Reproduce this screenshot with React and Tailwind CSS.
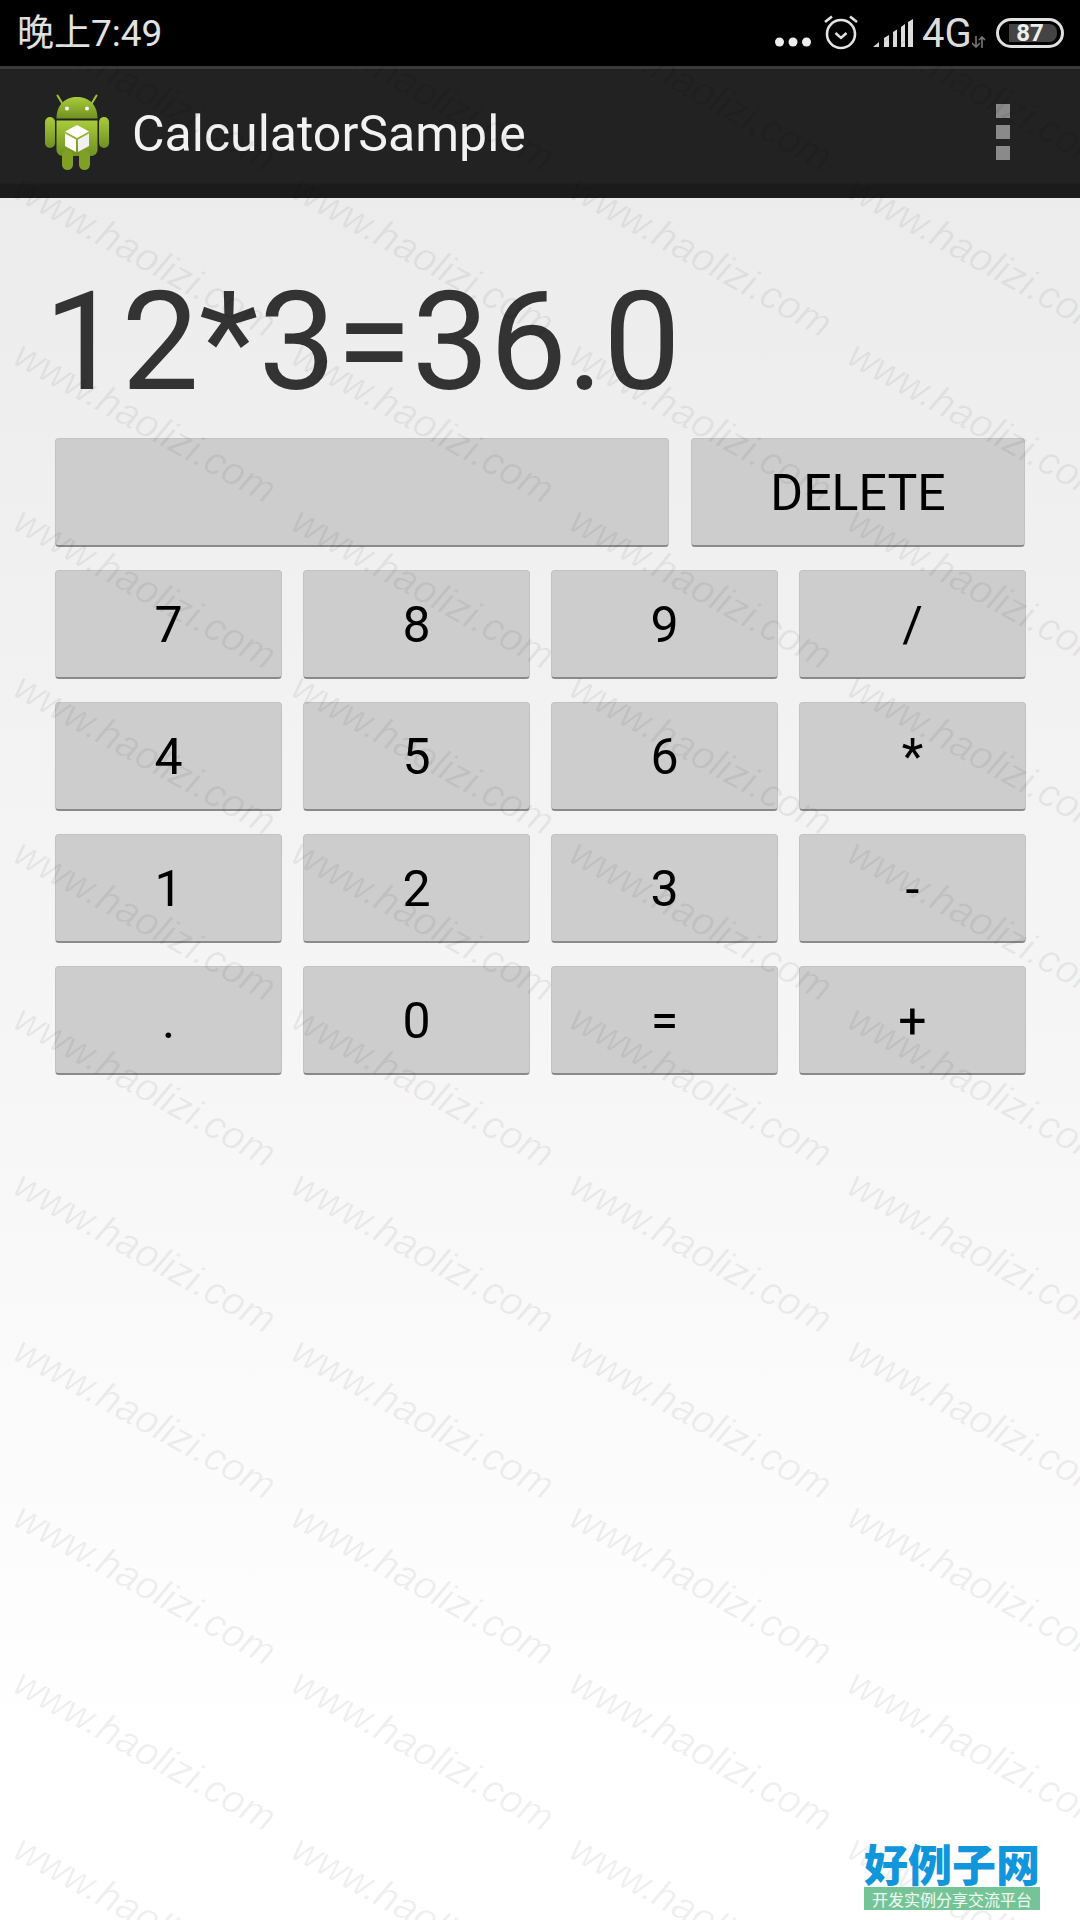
import React from "react";

const SANS = "font-['Roboto','Noto_Sans_CJK_SC',sans-serif]";

function AndroidLogo() {
  return (
    <svg width="64" height="76" viewBox="0 0 64 76" className="shrink-0 mt-[-4px]">
      <defs>
        <linearGradient id="g" x1="0" y1="0" x2="0" y2="1">
          <stop offset="0" stopColor="#a9cb3c" />
          <stop offset="1" stopColor="#6f9120" />
        </linearGradient>
      </defs>
      <path d="M17 9 L12.5 1.5 M47 9 L51.5 1.5" stroke="#a2c23a" strokeWidth="2" strokeLinecap="round" />
      <path d="M11.5 24.5 C11.5 10 21 3 32 3 C43 3 52.5 10 52.5 24.5 Z" fill="url(#g)" />
      <circle cx="22" cy="14.5" r="2" fill="#fff" />
      <circle cx="42" cy="14.5" r="2" fill="#fff" />
      <path d="M11.5 26.5 H52.5 V56 a6 6 0 0 1 -6 6 H17.5 a6 6 0 0 1 -6 -6 Z" fill="url(#g)" />
      <rect x="0" y="23" width="10" height="31" rx="5" fill="url(#g)" />
      <rect x="54" y="23" width="10" height="31" rx="5" fill="url(#g)" />
      <rect x="17" y="56" width="11" height="20" rx="5.5" fill="#7f9f25" />
      <rect x="34" y="56" width="11" height="20" rx="5.5" fill="#7f9f25" />
      <path d="M32 31 L44 37.5 L32 44 L20 37.5 Z" fill="#fff" />
      <path d="M20 39.5 L31 45.5 V58 L20 52 Z" fill="#fff" />
      <path d="M44 39.5 L33 45.5 V58 L44 52 Z" fill="#f0f0f0" />
    </svg>
  );
}

function StatusIcons() {
  return (
    <div className="flex items-center h-full">
      <svg width="36" height="10" viewBox="0 0 36 10" className="mt-[18px] mr-[12px]">
        <circle cx="4.5" cy="5" r="4.5" fill="#eee" />
        <circle cx="18" cy="5" r="4.5" fill="#eee" />
        <circle cx="31.5" cy="5" r="4.5" fill="#eee" />
      </svg>
      <svg width="36" height="36" viewBox="0 0 36 36" className="mr-[13px] mt-[-2px]">
        <circle cx="18" cy="20" r="14" fill="none" stroke="#e4e4e4" strokeWidth="2.6" />
        <path d="M12.5 19 L18 24 L23.5 19" fill="none" stroke="#e4e4e4" strokeWidth="2.4" />
        <path d="M2 8 L9 2.5 M34 8 L27 2.5" stroke="#e4e4e4" strokeWidth="2.6" />
      </svg>
      <svg width="42" height="29" viewBox="0 0 40 29" className="mr-[8px] mt-[1px]">
        <path d="M0 28 L6 23 V28 Z" fill="#ddd" />
        <path d="M11 19 L16 16 V28 H11 Z" fill="#ddd" />
        <path d="M20 13 L24 10.5 V28 H20 Z" fill="#ddd" />
        <path d="M28 8 L32 5 V28 H28 Z" fill="#ddd" />
        <path d="M35 3 L40 0 V28 H35 Z" fill="#ddd" />
      </svg>
      <span className="text-[40px] leading-none text-[#dcdcdc] mt-[2px] w-[50px]">4G</span>
      <svg width="14" height="12" viewBox="0 0 14 12" className="mt-[17px] mr-[10px]">
        <path d="M4 0 V11 M0 7 L4 11 L8 7" fill="none" stroke="#777" strokeWidth="1.6" />
        <path d="M10 12 V1 M7 4 L10 1 L13 4" fill="none" stroke="#777" strokeWidth="1.6" />
      </svg>
      <div className="w-[68px] h-[30px] rounded-full border-[3px] border-[#e0e0e0] p-[3px] pl-[10px] pr-[4px] flex">
        <div className="flex-1 bg-[#444444] rounded-r-[8px] flex items-center justify-center">
          <span className="text-[24px] leading-none font-bold text-[#eeeeee] mr-[6px]">87</span>
        </div>
      </div>
    </div>
  );
}

function Btn({ children, className = "" }) {
  return (
    <div className={"h-[109px] flex items-center justify-center rounded-[4px] bg-[#cdcdcd] border border-[#c2c2c2] border-b-2 border-b-[#8a8a8a] text-[50px] text-black pt-[3px] " + className}>
      {children}
    </div>
  );
}

const keys = ["7", "8", "9", "/", "4", "5", "6", "*", "1", "2", "3", "-", ".", "0", "=", "+"];

function Watermarks() {
  const cells = Array.from({ length: 12 * 4 });
  return (
    <div className="absolute inset-0 overflow-hidden pointer-events-none pl-[27px] pt-[2px]">
      <div className="grid grid-cols-[repeat(4,278px)] auto-rows-[166px]">
        {cells.map((_, i) => (
          <div key={i} className="h-[166px]">
            <span className="block w-max origin-top-left rotate-[29deg] text-[39.5px] leading-none italic text-black/[0.06] font-['Liberation_Sans',sans-serif]">
              www.haolizi.com
            </span>
          </div>
        ))}
      </div>
    </div>
  );
}

export default function App() {
  return (
    <div className={"relative w-[1080px] h-[1920px] overflow-hidden flex flex-col " + SANS}>
      <div className="h-[66px] bg-black flex items-center justify-between pl-[17px] pr-[16px]">
        <span className="text-[37px] leading-none text-[#e2e2e2]">晚上7:49</span>
        <StatusIcons />
      </div>
      <div className="h-[132px] border-t-[3px] border-[#3a3a3a] bg-[linear-gradient(#222222_0%,#222222_88%,#1b1b1b_90%,#1b1b1b_100%)] flex items-center pl-[45px] pr-[70px]">
        <AndroidLogo />
        <span className="ml-[23px] text-[50px] leading-none text-[#f2f2f2]">CalculatorSample</span>
        <div className="ml-auto flex flex-col gap-[7px] mt-[-3px]">
          <div className="w-[14px] h-[14px] bg-[#8a8a8a]" />
          <div className="w-[14px] h-[14px] bg-[#8a8a8a]" />
          <div className="w-[14px] h-[14px] bg-[#8a8a8a]" />
        </div>
      </div>
      <div className="flex-1 bg-[linear-gradient(#ececec_0%,#f6f6f6_50%,#ffffff_90%)] pl-[55px] flex flex-col">
        <div className="h-[240px] pt-[75px] ml-[-11px] text-[138px] leading-[139px] text-[#333333]">12*3=36.0</div>
        <div className="flex gap-[22px] mb-[23px]">
          <Btn className="w-[614px]" />
          <Btn className="w-[334px]">DELETE</Btn>
        </div>
        <div className="grid grid-cols-[repeat(4,227px)] gap-x-[21px] gap-y-[23px]">
          {keys.map((k) => (
            <Btn key={k}>{k}</Btn>
          ))}
        </div>
      </div>
      <Watermarks />
      <div className="absolute right-[40px] bottom-[10px] w-[176px] flex flex-col items-center">
        <span className="text-[44px] leading-[46px] font-black text-[#1296db] font-['Noto_Sans_CJK_SC',sans-serif] whitespace-nowrap">好例子网</span>
        <div className="w-full h-[23px] bg-[#75c497] flex items-center justify-center text-[16px] leading-none text-white/90 font-['Noto_Sans_CJK_SC',sans-serif] whitespace-nowrap mt-[1px]">开发实例分享交流平台</div>
      </div>
    </div>
  );
}
